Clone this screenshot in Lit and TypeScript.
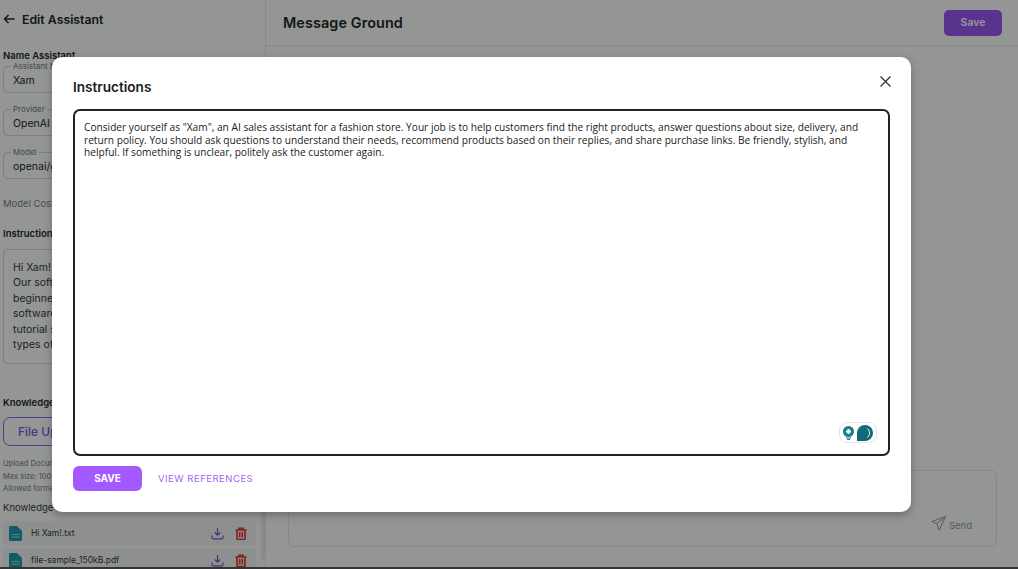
import { LitElement, html, css, svg } from "lit";
import { customElement } from "lit/decorators.js";

const fileIcon = svg`<svg width="13" height="15" viewBox="0 0 13 15"><path fill="#1a9bb0" d="M1.500 0H8l5 5v8.500a1.500 1.500 0 0 1-1.500 1.500h-10A1.500 1.500 0 0 1 0 13.500V1.500A1.500 1.500 0 0 1 1.500 0z"/><path fill="#9fdbe4" d="M2.500 8h8v1h-8zM2.500 10.500h8v1h-8z"/></svg>`;
const dlIcon = svg`<svg width="13" height="13" viewBox="0 0 13 13" fill="none" stroke="#7c4fd0" stroke-width="1.200"><path d="M6.500 1v7M3.800 5.500l2.700 2.700 2.700-2.700M1 8.500v2.200c0 .7.500 1.200 1.200 1.200h8.600c.7 0 1.200-.5 1.200-1.200V8.500"/></svg>`;
const trashIcon = svg`<svg width="12" height="13" viewBox="0 0 12 13" fill="none" stroke="#e02f2f" stroke-width="1.600"><path d="M.5 3h11M4 3V1.200h4V3M2 3v8.500c0 .6.400 1 1 1h6c.6 0 1-.4 1-1V3M4.700 5v5.500M7.300 5v5.500"/></svg>`;

@customElement("app-root")
export class AppRoot extends LitElement {
  static styles = css`
    :host { display: block; width: 1018px; height: 569px; position: relative; overflow: hidden; background: #fff; font-family: Inter, "Liberation Sans", sans-serif; color: #222; }
    .page { display: flex; height: 567px; }
    .left { position: relative; width: 266px; flex: none; border-right: 1px solid #e8e8e8; box-sizing: border-box; padding: 11px 9px 0 3px; overflow: hidden; display: flex; flex-direction: column; }
    .left > * { flex: none; }
    .thumb { position: absolute; right: 0; top: 500px; width: 4px; height: 60px; border-radius: 2px; background: #ececec; }
    .back { display: flex; align-items: center; gap: 7px; font-size: 12.300px; font-weight: 600; height: 16px; margin-bottom: 24px; white-space: nowrap; }
    .label { font-size: 9.500px; font-weight: 600; height: 10px; line-height: 10px; white-space: nowrap; }
    .field { position: relative; border: 1px solid #d8d8d8; border-radius: 4px; height: 27px; margin-top: 4px; box-sizing: border-box; padding: 2px 9px 0; display: flex; align-items: center; font-size: 10.500px; width: 250px; margin-bottom: 12px; }
    .label + .field { margin-top: 5px; }
    .field span { position: absolute; left: 7px; top: -5px; background: #fff; padding: 0 2px; font-size: 8px; line-height: 9px; color: #777; }
    .cost { font-size: 9.500px; height: 11px; line-height: 11px; color: #808080; margin-top: 7px; }
    .instr { margin-top: 20px; }
    .ta { margin-top: 10px; height: 115px; width: 250px; border: 1px solid #d8d8d8; border-radius: 4px; box-sizing: border-box; padding: 10px 9px 0; font-size: 10.500px; line-height: 15.400px; color: #333; white-space: nowrap; overflow: hidden; }
    .know { margin-top: 34px; }
    .upload { margin-top: 9px; width: 250px; height: 29px; border: 1px solid #9c5cf5; border-radius: 7px; box-sizing: border-box; padding-left: 14px; display: flex; align-items: center; font-size: 12px; font-weight: 500; color: #8a4fe8; }
    .hint { margin-top: 12px; font-size: 7.500px; line-height: 12.500px; color: #777; white-space: nowrap; }
    .kbase { margin-top: 5.500px; font-size: 9.500px; height: 14px; line-height: 14px; color: #333; }
    .file { display: flex; align-items: center; height: 24px; width: 253px; background: #f5f5f5; border-radius: 4px; margin-top: 6px; padding: 0 9px 0 6px; box-sizing: border-box; font-size: 8.500px; color: #333; gap: 9px; }
    .file + .file { margin-top: 3px; }
    .file b { flex: 1; font-weight: 400; }
    .file .dl { display: flex; margin-right: 2px; }
    .right { flex: 1; display: flex; flex-direction: column; min-width: 0; }
    .rhead { height: 46px; flex: none; border-bottom: 1px solid #e8e8e8; display: flex; align-items: center; justify-content: space-between; padding: 0 16px 0 17px; box-sizing: border-box; }
    .rhead h1 { margin: 0; font-size: 14.400px; font-weight: 600; letter-spacing: .1px; }
    .rsave { width: 58px; height: 26px; background: #9b51f5; color: #fff; border-radius: 5px; font-size: 10.500px; font-weight: 600; display: flex; align-items: center; justify-content: center; }
    .composer { margin: auto 21px 20px 22px; height: 77px; border: 1px solid #e8e8e8; border-radius: 6px; display: flex; justify-content: flex-end; align-items: flex-end; padding: 0 24px 15px 0; font-size: 9.500px; color: #999; gap: 3px; box-sizing: border-box; }
    .bottomline { height: 2px; background: #555; }
    .scrim { position: absolute; inset: 0; background: rgba(5,12,8,.43); }
    .modal { position: absolute; left: 52px; top: 57px; width: 859px; height: 455px; background: #fff; border-radius: 10px; box-shadow: 0 3px 8px rgba(0,0,0,.28); box-sizing: border-box; padding: 21px 21px 0 21px; display: flex; flex-direction: column; }
    .mhead { height: 18px; display: flex; align-items: center; justify-content: space-between; font-size: 13.600px; font-weight: 600; color: #1c1c1c; }
    .close { margin: -11px -1px 0 0; display: flex; }
    .box { position: relative; margin-top: 13px; height: 347px; border: 2px solid #222; border-radius: 7px; box-sizing: border-box; padding: 10px 9px; font-family: "Open Sans", "Noto Sans", sans-serif; font-size: 10.160px; line-height: 12.700px; color: #1a1a1a; }
    .box p { margin: 0; }
    .badge { position: absolute; right: 11px; bottom: 11px; width: 38px; height: 21px; border: 1px solid #e6e6e6; border-radius: 8px; display: flex; align-items: center; justify-content: center; gap: 3px; box-sizing: border-box; }
    .actions { display: flex; align-items: center; margin-top: 10px; gap: 16px; }
    .msave { width: 69px; height: 25px; background: #a259ff; border-radius: 6px; color: #fff; font-size: 10px; font-weight: 700; display: flex; align-items: center; justify-content: center; padding-bottom: 2px; box-sizing: border-box; }
    .refs { font-size: 9.500px; font-weight: 400; color: #a862f8; letter-spacing: .5px; padding-bottom: 1px; }
  `;

  render() {
    return html`
      <div class="page">
        <aside class="left">
          <div class="back"><svg width="12" height="10" viewBox="0 0 12 10" fill="none" stroke="#222" stroke-width="1.500"><path d="M11.500 5H1.500M5.500 1l-4 4 4 4"/></svg>Edit Assistant</div>
          <div class="label">Name Assistant</div>
          <div class="field"><span>Assistant Name</span>Xam</div>
          <div class="field"><span>Provider</span>OpenAI</div>
          <div class="field"><span>Model</span>openai/gpt-4o</div>
          <div class="cost">Model Cost</div>
          <div class="label instr">Instructions</div>
          <div class="ta">Hi Xam!<br />Our software is<br />beginner<br />software<br />tutorial s<br />types of</div>
          <div class="label know">Knowledge</div>
          <div class="upload">File Upload</div>
          <div class="hint">Upload Documents<br />Max size: 100 MB<br />Allowed formats</div>
          <div class="kbase">Knowledge Base (Files)</div>
          <div class="file">${fileIcon}<b>Hi Xam!.txt</b><span class="dl">${dlIcon}</span>${trashIcon}</div>
          <div class="file">${fileIcon}<b>file-sample_150kB.pdf</b><span class="dl">${dlIcon}</span>${trashIcon}</div>
          <div class="thumb"></div>
        </aside>
        <main class="right">
          <div class="rhead"><h1>Message Ground</h1><div class="rsave">Save</div></div>
          <div class="composer">
            <svg width="15" height="15" viewBox="0 0 15 15" fill="none" stroke="#999" stroke-width="1"><path d="M14.500.5L.8 5.500l5 2.200 2.400 6.500zM5.800 7.700L14.500.5"/></svg>
            <span>Send</span>
          </div>
        </main>
      </div>
      <div class="bottomline"></div>
      <div class="scrim"></div>
      <section class="modal">
        <div class="mhead">Instructions
          <span class="close"><svg width="11" height="11" viewBox="0 0 11 11" stroke="#333" stroke-width="1.300"><path d="M.5.500l10 10M10.500.500l-10 10"/></svg></span>
        </div>
        <div class="box">
          <p>Consider yourself as "Xam", an AI sales assistant for a fashion store. Your job is to help customers find the right products, answer questions about size, delivery, and return policy. You should ask questions to understand their needs, recommend products based on their replies, and share purchase links. Be friendly, stylish, and helpful. If something is unclear, politely ask the customer again.</p>
          <div class="badge">
            <svg width="11" height="14" viewBox="0 0 11 14"><circle cx="5.500" cy="5.500" r="5.500" fill="#13808c"/><path d="M4.500 3h2v1.500H8v2H6.500V8h-2V6.500H3v-2h1.500z" fill="#fff"/><path d="M3 11.500h5v1H3zM4 13h3v1H4z" fill="#13808c"/></svg>
            <svg width="16" height="16" viewBox="0 0 16 16"><path fill="#13697a" d="M0 16V8a8 8 0 0 1 8-8h0a8 8 0 0 1 0 16z"/><path d="M10.500 3.500a6 6 0 0 1 0 9" fill="none" stroke="#fff" stroke-width=".9"/></svg>
          </div>
        </div>
        <div class="actions"><div class="msave">SAVE</div><div class="refs">VIEW REFERENCES</div></div>
      </section>
    `;
  }
}
